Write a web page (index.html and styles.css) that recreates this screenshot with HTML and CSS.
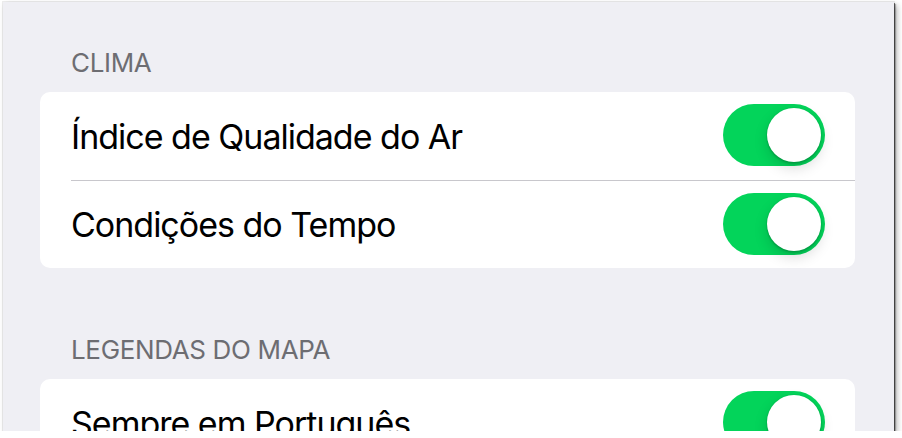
FILE: index.html
```html
<!DOCTYPE html>
<html lang="pt">
<head>
    <meta charset="UTF-8">
    <meta name="viewport" content="width=device-width, initial-scale=1.0">
    <title>Ajustes - Mapas</title>
    <link rel="stylesheet" href="styles.css">
</head>
<body>
    <div class="screen">
        <section class="group">
            <h2 class="group-header">CLIMA</h2>
            <div class="card">
                <div class="row">
                    <span class="row-label">Índice de Qualidade do Ar</span>
                    <span class="switch on"><span class="knob"></span></span>
                </div>
                <div class="row">
                    <span class="row-label">Condições do Tempo</span>
                    <span class="switch on"><span class="knob"></span></span>
                </div>
            </div>
        </section>

        <section class="group">
            <h2 class="group-header">LEGENDAS DO MAPA</h2>
            <div class="card">
                <div class="row">
                    <span class="row-label">Sempre em Português</span>
                    <span class="switch on"><span class="knob"></span></span>
                </div>
            </div>
        </section>
    </div>
</body>
</html>
```

FILE: styles.css
```css
/* Design tokens */
:root {
    --bg-grouped: #efeff4;
    --bg-cell: #ffffff;
    --text-primary: #000000;
    --text-header: #6d6d72;
    --separator: #c8c7cc;
    --switch-on: #03d45a;

    --radius-card: 10px;
    --row-height: 88px;
}

* {
    box-sizing: border-box;
    margin: 0;
    padding: 0;
}

body {
    font-family: Inter, "Noto Sans", sans-serif;
    background: #ffffff;
    padding: 2px 0 0 3px;
}

.screen {
    width: 891px;
    height: 429px;
    overflow: hidden;
    background: var(--bg-grouped);
    padding: 0 39px 0 37px;
    box-shadow:
        0 0 0 1px rgba(0, 0, 0, 0.07),
        1px 1px 0 rgba(0, 0, 0, 0.5),
        2px 2px 1px rgba(0, 0, 0, 0.25),
        3px 3px 6px rgba(0, 0, 0, 0.3);
}

.group-header {
    font-size: 26px;
    font-weight: 400;
    line-height: 32px;
    letter-spacing: -0.35px;
    color: var(--text-header);
    padding: 0 0 13px 31px;
    margin-top: 66px;
}

.group:first-child .group-header {
    margin-top: 45px;
}

.card {
    background: var(--bg-cell);
    border-radius: var(--radius-card);
}

.row {
    height: var(--row-height);
    margin-left: 31px;
    padding-right: 30px;
    display: flex;
    align-items: center;
    justify-content: space-between;
}

.row + .row {
    border-top: 1px solid var(--separator);
}

.row-label {
    font-size: 34px;
    color: var(--text-primary);
    letter-spacing: -1px;
}

.switch {
    width: 102px;
    height: 62px;
    border-radius: 31px;
    background: #e5e5ea;
    padding: 4px;
    display: flex;
    align-items: center;
    margin-top: -2px;
}

.switch.on {
    background: var(--switch-on);
    justify-content: flex-end;
}

.knob {
    width: 54px;
    height: 54px;
    border-radius: 50%;
    background: #ffffff;
    box-shadow:
        0 6px 14px rgba(0, 0, 0, 0.15),
        0 2px 2px rgba(0, 0, 0, 0.14),
        0 0 0 1px rgba(0, 0, 0, 0.04);
}
```
